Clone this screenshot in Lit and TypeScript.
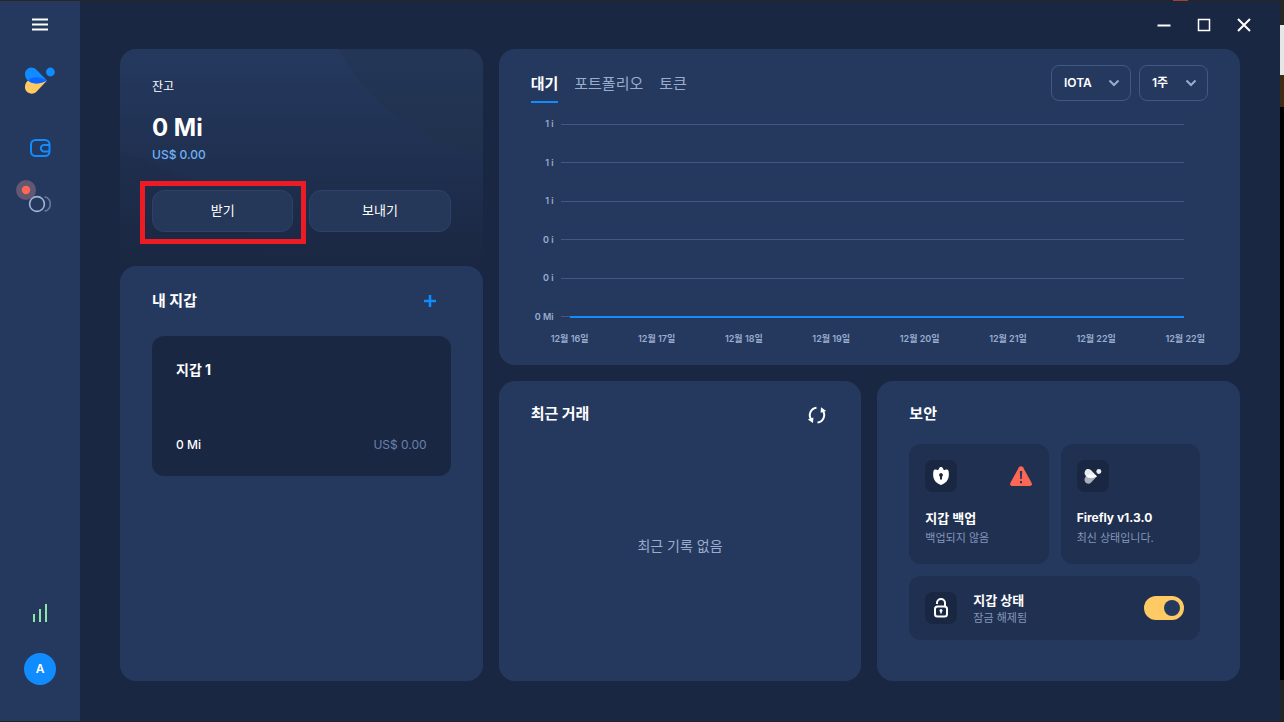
import { LitElement, html, css, svg } from "lit";
import { customElement, state } from "lit/decorators.js";
import { classMap } from "lit/directives/class-map.js";

const butterfly = (top: string, bottom: string, overlap: string, dot: string) => svg`
  <path d="M4.200 16.200C1.300 18.600.4 22 1.200 25c1.400 4.600 7.400 6.200 11 3L23 16.600Z" fill=${bottom}/>
  <path d="M4 16.600C.8 13.800 0 9 2.400 6 5 2.600 9.400 2.800 12.200 5.400L23 16.600C16 20.400 8 20.400 4 16.600Z" fill=${top}/>
  <path d="M4 16.600C7 12.400 15 12 23 16.600 16 20.600 8 20.400 4 16.600Z" fill=${overlap}/>
  <circle cx="26.400" cy="8" r="4.400" fill=${dot}/>`;

@customElement("app-root")
export class AppRoot extends LitElement {
  @state() private tab = 0;

  private tabs = ["대기", "포트폴리오", "토큰"];
  private levels = ["1 i", "1 i", "1 i", "0 i", "0 i"];
  private days = ["16", "17", "18", "19", "20", "21", "22", "22"];

  static styles = css`
    :host {
      display: block;
      font-family: Inter, "Noto Sans CJK KR", sans-serif;
      font-size: 12px;
      line-height: 16px;
      color: #fff;
      --bg: #1a2742;
      --panel: #25395f;
      --muted: #9aadce;
      --blue: #108cff;
    }
    * { box-sizing: border-box; }
    h2, h3, p { margin: 0; font-size: inherit; font-weight: inherit; }
    svg { display: block; flex: none; }
    button, select {
      font: inherit;
      color: inherit;
      background: none;
      border: 0;
      padding: 0;
      margin: 0;
      cursor: pointer;
    }
    .desktop {
      min-height: 100vh;
      display: flex;
      padding: 1px 4px 1px 0;
      background:
        linear-gradient(#a8402c, #a8402c) right 96px top / 15px 1px no-repeat,
        linear-gradient(#262626 25px, #e6e6e6 25px 75px, #3f2a14 75px 107px, #000 107px 680px, #222327 680px);
    }
    .window { flex: 1; display: flex; background: var(--bg); }
    .side {
      width: 80px;
      background: var(--panel);
      display: flex;
      flex-direction: column;
      align-items: center;
      padding: 16px 0 36px;
    }
    .side .logo { margin-top: 31px; }
    .side .wallet { margin-top: 42px; }
    .side .staking { margin-top: 20px; }
    .side .status { margin-top: auto; }
    .avatar {
      width: 32px;
      height: 32px;
      border-radius: 50%;
      background: var(--blue);
      font-weight: 600;
      margin-top: 31px;
    }
    .main { flex: 1; display: flex; flex-direction: column; }
    .controls {
      height: 48px;
      display: flex;
      justify-content: flex-end;
      align-items: center;
      gap: 24px;
      padding-right: 28px;
    }
    .content {
      flex: 1;
      display: grid;
      grid-template-columns: repeat(3, minmax(0, 1fr));
      grid-template-rows: auto 1fr;
      gap: 16px;
      padding: 0 40px 40px;
    }
    .panel { background: var(--panel); border-radius: 16px; }
    .left { grid-row: span 2; display: flex; flex-direction: column; }
    .balance {
      padding: 30px 32px 34px;
      border-radius: 16px 16px 0 0;
      background:
        radial-gradient(circle at 409px -106px, rgb(32 50 72 / 0.4) 0 218px, transparent 219px),
        radial-gradient(circle at -60px 340px, rgb(26 39 62 / 0.2) 0 244px, transparent 245px),
        linear-gradient(#25395f, #1a2742);
    }
    .amount { font-size: 24px; line-height: 32px; font-weight: 700; margin-top: 17px; }
    .fiat { font-weight: 500; color: #72b1f3; margin-top: 1px; line-height: 20px; }
    .actions { display: grid; grid-template-columns: 1fr 1fr; gap: 16px; margin-top: 25px; }
    .action { position: relative; display: grid; }
    .action button {
      height: 42px;
      border-radius: 12px;
      border: 1px solid #2d4268;
      background: #263859;
      font-size: 13px;
      padding-bottom: 2px;
    }
    .marked::after {
      content: "";
      position: absolute;
      inset: -9px -13px -12px -12px;
      border: 5px solid #ed1c24;
      pointer-events: none;
    }
    .wallets { flex: 1; padding: 24px 32px 32px; }
    .head { display: flex; justify-content: space-between; align-items: center; }
    .title { font-size: 15px; line-height: 22px; font-weight: 700; }
    .add { margin-right: 14px; }
    .card {
      margin-top: 24px;
      height: 140px;
      border-radius: 12px;
      background: var(--bg);
      padding: 24px 24px 23px;
      display: flex;
      flex-direction: column;
      justify-content: space-between;
    }
    .card .name { font-size: 14px; line-height: 20px; font-weight: 700; }
    .card .row { display: flex; justify-content: space-between; font-weight: 500; }
    .card .worth { color: #6a80ad; font-weight: 400; }
    .chart { grid-column: span 2; padding: 16px 32px 18px; }
    .top { display: flex; justify-content: space-between; align-items: flex-start; }
    .tabs { display: flex; gap: 16px; }
    .tab {
      font-size: 15px;
      line-height: 20px;
      color: var(--muted);
      padding: 9px 0 7px;
      border-bottom: 2px solid transparent;
    }
    .tab.on { color: #fff; font-weight: 700; border-color: var(--blue); }
    .filters { display: flex; gap: 8px; }
    .filter { position: relative; display: block; }
    .filter select {
      appearance: none;
      height: 36px;
      padding: 0 38px 0 12px;
      border: 1px solid #405985;
      border-radius: 8px;
      font-weight: 600;
    }
    .filter svg { position: absolute; right: 11px; top: 14px; pointer-events: none; }
    .plot {
      display: flex;
      flex-direction: column;
      justify-content: space-between;
      height: 209px;
      margin: 13px 24px 0 0;
      color: var(--muted);
      font-size: 9px;
      font-weight: 600;
    }
    .level { display: flex; align-items: center; gap: 7px; }
    .level span { width: 23px; text-align: right; white-space: nowrap; }
    .rule { flex: 1; height: 1px; background: #405985; }
    .rule.lead { flex: 0 0 9px; margin-right: -7px; }
    .rule.value { height: 2px; background: #108cff; }
    .days {
      display: flex;
      justify-content: space-between;
      margin: 6px 3px 0 20px;
      color: var(--muted);
      font-size: 9px;
      font-weight: 600;
    }
    .recent { padding: 22px 32px; display: flex; flex-direction: column; }
    .recent .head { align-items: flex-end; }
    .empty { flex: 1; display: grid; place-items: center; padding-top: 8px; font-size: 14px; color: var(--muted); }
    .security { padding: 22px 40px 32px 32px; }
    .tiles { display: grid; grid-template-columns: 1fr 1fr; gap: 12px; margin-top: 19px; }
    .tile { background: #203050; border-radius: 12px; padding: 16px; min-height: 120px; }
    .badge { width: 32px; height: 32px; border-radius: 8px; background: var(--bg); display: grid; place-items: center; }
    .tile h3 { font-size: 13px; line-height: 20px; font-weight: 700; }
    .tile h3.version { font-size: 12px; }
    .tile .head + h3 { margin-top: 16px; }
    .tile p { font-size: 11px; line-height: 16px; color: #8497bd; margin-top: 2px; }
    .tile.wide {
      grid-column: span 2;
      min-height: 64px;
      padding: 14px 16px;
      display: flex;
      align-items: center;
      gap: 16px;
    }
    .wide .words { flex: 1; }
    .wide p { margin-top: 0; }
    .alert { margin-right: 1px; }
    .switch {
      appearance: none;
      width: 40px;
      height: 24px;
      margin: 0;
      border-radius: 12px;
      background: #ffca63;
      display: flex;
      align-items: center;
      justify-content: flex-start;
      padding: 4px;
    }
    .switch::before { content: ""; width: 16px; height: 16px; border-radius: 50%; background: var(--panel); }
    .switch:checked { justify-content: flex-end; }
  `;

  private chevron() {
    return html`<svg width="12" height="8" viewBox="0 0 12 8" fill="none" stroke="#9aadce" stroke-width="2"><path d="M1.500 1.500 6 6 10.500 1.500"/></svg>`;
  }

  render() {
    return html`
      <div class="desktop">
        <div class="window">
          <nav class="side">
            <button aria-label="Menu">
              <svg width="16" height="16" viewBox="0 0 16 16" stroke="#fff" stroke-width="2"><path d="M0 2.500h16M0 7.500h16M0 12.500h16"/></svg>
            </button>
            <svg class="logo" width="32" height="32" viewBox="0 0 32 32">${butterfly("#108cff", "#ffca63", "#0d66ff", "#108cff")}</svg>
            <button class="wallet" aria-label="Wallet">
              <svg width="22" height="20" viewBox="0 0 22 20" fill="none" stroke="#108cff" stroke-width="2"><rect x="2" y="2" width="18.500" height="16" rx="4.500"/><path d="M20.500 7H15a3.200 3.200 0 0 0 0 6.400h5.500"/></svg>
            </button>
            <button class="staking" aria-label="Staking">
              <svg width="48" height="40" viewBox="0 0 48 40" fill="none" stroke-width="1.600">
                <circle cx="10" cy="12" r="10" fill="#635872"/><circle cx="10" cy="12" r="4.200" fill="#ff6755"/>
                <path d="M28.500 18.700a7.500 7.500 0 0 1 0 14.600" stroke="#66789f"/><circle cx="21" cy="26" r="7.400" fill="#25395f" stroke="#a3b5d6"/>
              </svg>
            </button>
            <svg class="status" width="16" height="18" viewBox="0 0 16 18" fill="#8de5a8"><path d="M1 10h2v8H1zM7 5h2v13H7zM13 0h2v18h-2z"/></svg>
            <button class="avatar">A</button>
          </nav>
          <div class="main">
            <div class="controls">
              <button aria-label="Minimize"><svg width="16" height="16" viewBox="0 0 16 16" stroke="#fff" stroke-width="2"><path d="M1.500 8.500h13"/></svg></button>
              <button aria-label="Maximize"><svg width="16" height="16" viewBox="0 0 16 16" fill="none" stroke="#fff" stroke-width="1.500"><path d="M2.500 2.500h11v11h-11z"/></svg></button>
              <button aria-label="Close"><svg width="16" height="16" viewBox="0 0 16 16" stroke="#fff" stroke-width="2"><path d="m2 2 12 12M14 2 2 14"/></svg></button>
            </div>
            <main class="content">
              <section class="left">
                <div class="balance">
                  <p>잔고</p>
                  <p class="amount">0 Mi</p>
                  <p class="fiat">US$ 0.00</p>
                  <div class="actions">
                    <div class="action marked"><button>받기</button></div>
                    <div class="action"><button>보내기</button></div>
                  </div>
                </div>
                <div class="wallets panel">
                  <div class="head">
                    <h2 class="title">내 지갑</h2>
                    <button class="add" aria-label="지갑 추가"><svg width="14" height="14" viewBox="0 0 14 14" stroke="#108cff" stroke-width="2.500"><path d="M7 1v12M1 7h12"/></svg></button>
                  </div>
                  <article class="card">
                    <h3 class="name">지갑 1</h3>
                    <div class="row"><span>0 Mi</span><span class="worth">US$ 0.00</span></div>
                  </article>
                </div>
              </section>
              <section class="chart panel">
                <div class="top">
                  <div class="tabs" role="tablist">
                    ${this.tabs.map((t, i) => html`<button role="tab" aria-selected=${i === this.tab} class=${classMap({ tab: true, on: i === this.tab })} @click=${() => (this.tab = i)}>${t}</button>`)}
                  </div>
                  <div class="filters">
                    <label class="filter"><select aria-label="IOTA"><option>IOTA</option></select>${this.chevron()}</label>
                    <label class="filter"><select aria-label="1주"><option>1주</option></select>${this.chevron()}</label>
                  </div>
                </div>
                <div class="plot">
                  ${this.levels.map((l) => html`<div class="level"><span>${l}</span><div class="rule"></div></div>`)}
                  <div class="level"><span>0 Mi</span><div class="rule lead"></div><div class="rule value"></div></div>
                </div>
                <div class="days">${this.days.map((d) => html`<span>12월 ${d}일</span>`)}</div>
              </section>
              <section class="recent panel">
                <div class="head">
                  <h2 class="title">최근 거래</h2>
                  <button aria-label="새로고침">
                    <svg width="24" height="20" viewBox="0 0 24 20" fill="none" stroke="#fff" stroke-width="2">
                      <path d="M11.500 2.800a7.400 7.400 0 0 0-5.200 11.800M12.500 17.500a7.400 7.400 0 0 0 5.200-11.800"/>
                      <path d="M2.800 14.400 8.400 12.600 8 18zM21.200 5.900 15.600 7.700 16 2.300z" fill="#fff" stroke="none"/>
                    </svg>
                  </button>
                </div>
                <p class="empty">최근 기록 없음</p>
              </section>
              <section class="security panel">
                <h2 class="title">보안</h2>
                <div class="tiles">
                  <article class="tile">
                    <div class="head">
                      <span class="badge"><svg width="18" height="20" viewBox="0 0 18 20"><path d="M9 1c1 0 1.800.5 2.100 1.700.4 1.200 1.200 1.500 2.200 1.100 1.600-.6 3 .1 3.300 1.500C17.700 12 15.500 16.800 9 19 2.500 16.800.3 12 1.400 5.300c.3-1.400 1.700-2.100 3.300-1.500 1 .4 1.800.1 2.200-1.100C7.200 1.500 8 1 9 1Z" fill="#fff"/><path d="M9 7a2 2 0 0 1 1 3.700V13.500H8V10.700A2 2 0 0 1 9 7Z" fill="#1b2742"/></svg></span>
                      <svg class="alert" width="22" height="20" viewBox="0 0 22 20"><path d="M9 1.300Q11-1 13 1.300L21.700 17Q22.500 20 19.800 20H2.200Q-.5 20 .3 17Z" fill="#ff6755"/><path d="M9.800 5h2.400l-.4 8h-1.600zM10 15h2v2.200h-2z" fill="#25395f"/></svg>
                    </div>
                    <h3>지갑 백업</h3>
                    <p>백업되지 않음</p>
                  </article>
                  <article class="tile">
                    <div class="head"><span class="badge"><svg width="18" height="18" viewBox="0 0 32 32">${butterfly("#e9ebef", "#a9afbc", "#fff", "#e9ebef")}</svg></span></div>
                    <h3 class="version">Firefly v1.3.0</h3>
                    <p>최신 상태입니다.</p>
                  </article>
                  <article class="tile wide">
                    <span class="badge"><svg width="16" height="20" viewBox="0 0 16 20" fill="none" stroke="#fff" stroke-width="2"><rect x="2" y="8.500" width="12" height="10" rx="2.500"/><path d="M4 6V5a4 4 0 0 1 8 0v3.500"/><circle cx="8" cy="12.500" r="1.500" fill="#fff" stroke="none"/><path d="M8 12.500v3" stroke-width="1.500"/></svg></span>
                    <div class="words"><h3 id="lock">지갑 상태</h3><p>잠금 해제됨</p></div>
                    <input class="switch" type="checkbox" role="switch" checked aria-labelledby="lock">
                  </article>
                </div>
              </section>
            </main>
          </div>
        </div>
      </div>`;
  }
}
